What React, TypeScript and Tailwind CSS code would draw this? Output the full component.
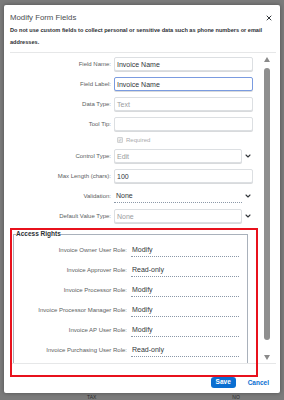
import { ChevronDown, X } from "lucide-react";

const font = { fontFamily: '"Liberation Sans", Arial, sans-serif' };

type FieldProps = {
  label: string;
  children: React.ReactNode;
};

function FieldRow({ label, children }: FieldProps) {
  return (
    <div className="flex h-[14px] items-center">
      <div className="w-[104px] shrink-0 pr-[3px] text-right text-[6px] leading-none text-[#5b5e61]">
        {label}
      </div>
      <div className="flex h-full flex-1 items-center">{children}</div>
    </div>
  );
}

function TextBox({ value, placeholder, focused, narrow }: { value?: string; placeholder?: string; focused?: boolean; narrow?: boolean }) {
  return (
    <div
      className={`flex h-[14px] items-center rounded-[2px] border bg-white px-[2px] text-[7px] leading-none shadow-[0_1px_0_#d8dadc] ${
        focused ? "border-[#7a9be0]" : "border-[#dcdfe2]"
      } ${narrow ? "w-[128px]" : "w-[139px]"}`}
    >
      {value ? (
        <span className="text-[#32363a]">{value}</span>
      ) : (
        <span className="text-[#9a9c9e]">{placeholder}</span>
      )}
    </div>
  );
}

function Chevron() {
  return <ChevronDown size={8} strokeWidth={3.2} className="ml-[2px] text-[#32363a]" />;
}

const roles: [string, string][] = [
  ["Invoice Owner User Role:", "Modify"],
  ["Invoice Approver Role:", "Read-only"],
  ["Invoice Processor Role:", "Modify"],
  ["Invoice Processor Manager Role:", "Modify"],
  ["Invoice AP User Role:", "Modify"],
  ["Invoice Purchasing User Role:", "Read-only"],
];

export default function App() {
  return (
    <div style={font} className="relative flex h-[400px] w-[284px] flex-col overflow-hidden bg-[#7b7b7b]">
      {/* Dialog */}
      <div className="ml-[4px] mt-[5px] flex h-[388px] w-[276px] shrink-0 flex-col rounded-[2px] bg-white shadow-[0_0_4px_rgba(0,0,0,0.35)]">
        {/* Header */}
        <div className="pl-[6px] pr-[4px] pt-[8px]">
          <div className="flex h-[10px] items-center justify-between">
            <span className="text-[7.8px] leading-none text-[#4a4d50]">Modify Form Fields</span>
            <X size={8} strokeWidth={3} className="mr-[3px] text-[#32363a]" />
          </div>
          <p className="mt-[1px] text-[5.6px] font-bold leading-[12px] text-[#2c2f33]">
            Do not use custom fields to collect personal or sensitive data such as phone numbers or email
            <br />
            addresses.
          </p>
          <div className="mt-[4px] h-px bg-[#e6e7e8]" />
        </div>

        {/* Scroll area */}
        <div className="flex h-[310px] overflow-hidden pl-[6px]">
          <div className="flex w-[248px] shrink-0 flex-col gap-[6px] pt-[4px]">
            <FieldRow label="Field Name:">
              <TextBox value="Invoice Name" />
            </FieldRow>
            <FieldRow label="Field Label:">
              <TextBox value="Invoice Name" focused />
            </FieldRow>
            <FieldRow label="Data Type:">
              <TextBox placeholder="Text" />
            </FieldRow>
            <FieldRow label="Tool Tip:">
              <TextBox />
            </FieldRow>
            <div className="flex h-[9px] items-center pl-[107px]">
              <span className="flex h-[6px] w-[6px] items-center justify-center rounded-[1px] border border-[#d0d2d4] bg-[#eceded] text-[5px] leading-none text-[#b5b7b9]">
                ✓
              </span>
              <span className="ml-[3px] text-[6px] leading-none text-[#a9abad]">Required</span>
            </div>
            <FieldRow label="Control Type:">
              <TextBox placeholder="Edit" narrow />
              <Chevron />
            </FieldRow>
            <FieldRow label="Max Length (chars):">
              <TextBox value="100" />
            </FieldRow>
            <FieldRow label="Validation:">
              <div className="flex h-[14px] w-[128px] items-center border-b border-dotted border-[#8b98a8] px-[2px] text-[7px] leading-none text-[#32363a]">
                None
              </div>
              <Chevron />
            </FieldRow>
            <FieldRow label="Default Value Type:">
              <TextBox placeholder="None" narrow />
              <Chevron />
            </FieldRow>

            {/* Access Rights */}
            <fieldset className="ml-[3px] mr-[10px] border border-[#a9b1bb] px-0 pb-[8px] pt-[4px]">
              <legend className="ml-[2px] px-0 text-[6.5px] font-bold leading-[10px] text-[#2c2f33]">
                Access Rights
              </legend>
              <div className="flex flex-col gap-[6px]">
                {roles.map(([label, value]) => (
                  <div key={label} className="flex h-[14px] items-center">
                    <div className="w-[117px] shrink-0 pr-[4px] text-right text-[6px] leading-none text-[#5b5e61]">
                      {label}
                    </div>
                    <div className="flex h-full w-[108px] items-center border-b border-dotted border-[#8b98a8] px-[1px] text-[7px] leading-none text-[#32363a]">
                      {value}
                    </div>
                  </div>
                ))}
              </div>
            </fieldset>
          </div>

          {/* Scrollbar */}
          <div className="ml-[5px] flex w-[8px] flex-col items-center pt-[4px]">
            <div className="h-0 w-0 border-x-[3.5px] border-b-[5px] border-x-transparent border-b-[#8a8a8a]" />
            <div className="mt-[6px] h-[272px] w-[6px] rounded-full bg-[#8f8f8f]" />
            <div className="mt-[15px] h-0 w-0 border-x-[3.5px] border-t-[5px] border-x-transparent border-t-[#8a8a8a]" />
          </div>
        </div>

        {/* Footer */}
        <div className="ml-[6px] mr-[4px] flex flex-1 items-start justify-end border-t border-[#e6e7e8] pr-[7px] pt-[13px]">
          <button className="flex h-[11px] w-[25px] items-center justify-center rounded-[3px] bg-[#0a6ed1] text-[6.5px] font-bold leading-none text-white">
            Save
          </button>
          <button className="ml-[12px] text-[6.5px] font-bold leading-[11px] text-[#0a6ed1]">Cancel</button>
        </div>
      </div>

      {/* Page behind the dialog, bottom edge */}
      <div className="flex h-[7px] items-start text-[5px] leading-[6px] text-[#2d2d2d]">
        <span className="ml-[87px] mt-[1px]">TAX</span>
        <span className="ml-[136px] mt-[1px]">NO</span>
      </div>

      {/* Annotation box */}
      <div className="pointer-events-none absolute left-[10px] top-[228px] h-[149px] w-[248px] border-2 border-[#e8111c]" />
    </div>
  );
}
